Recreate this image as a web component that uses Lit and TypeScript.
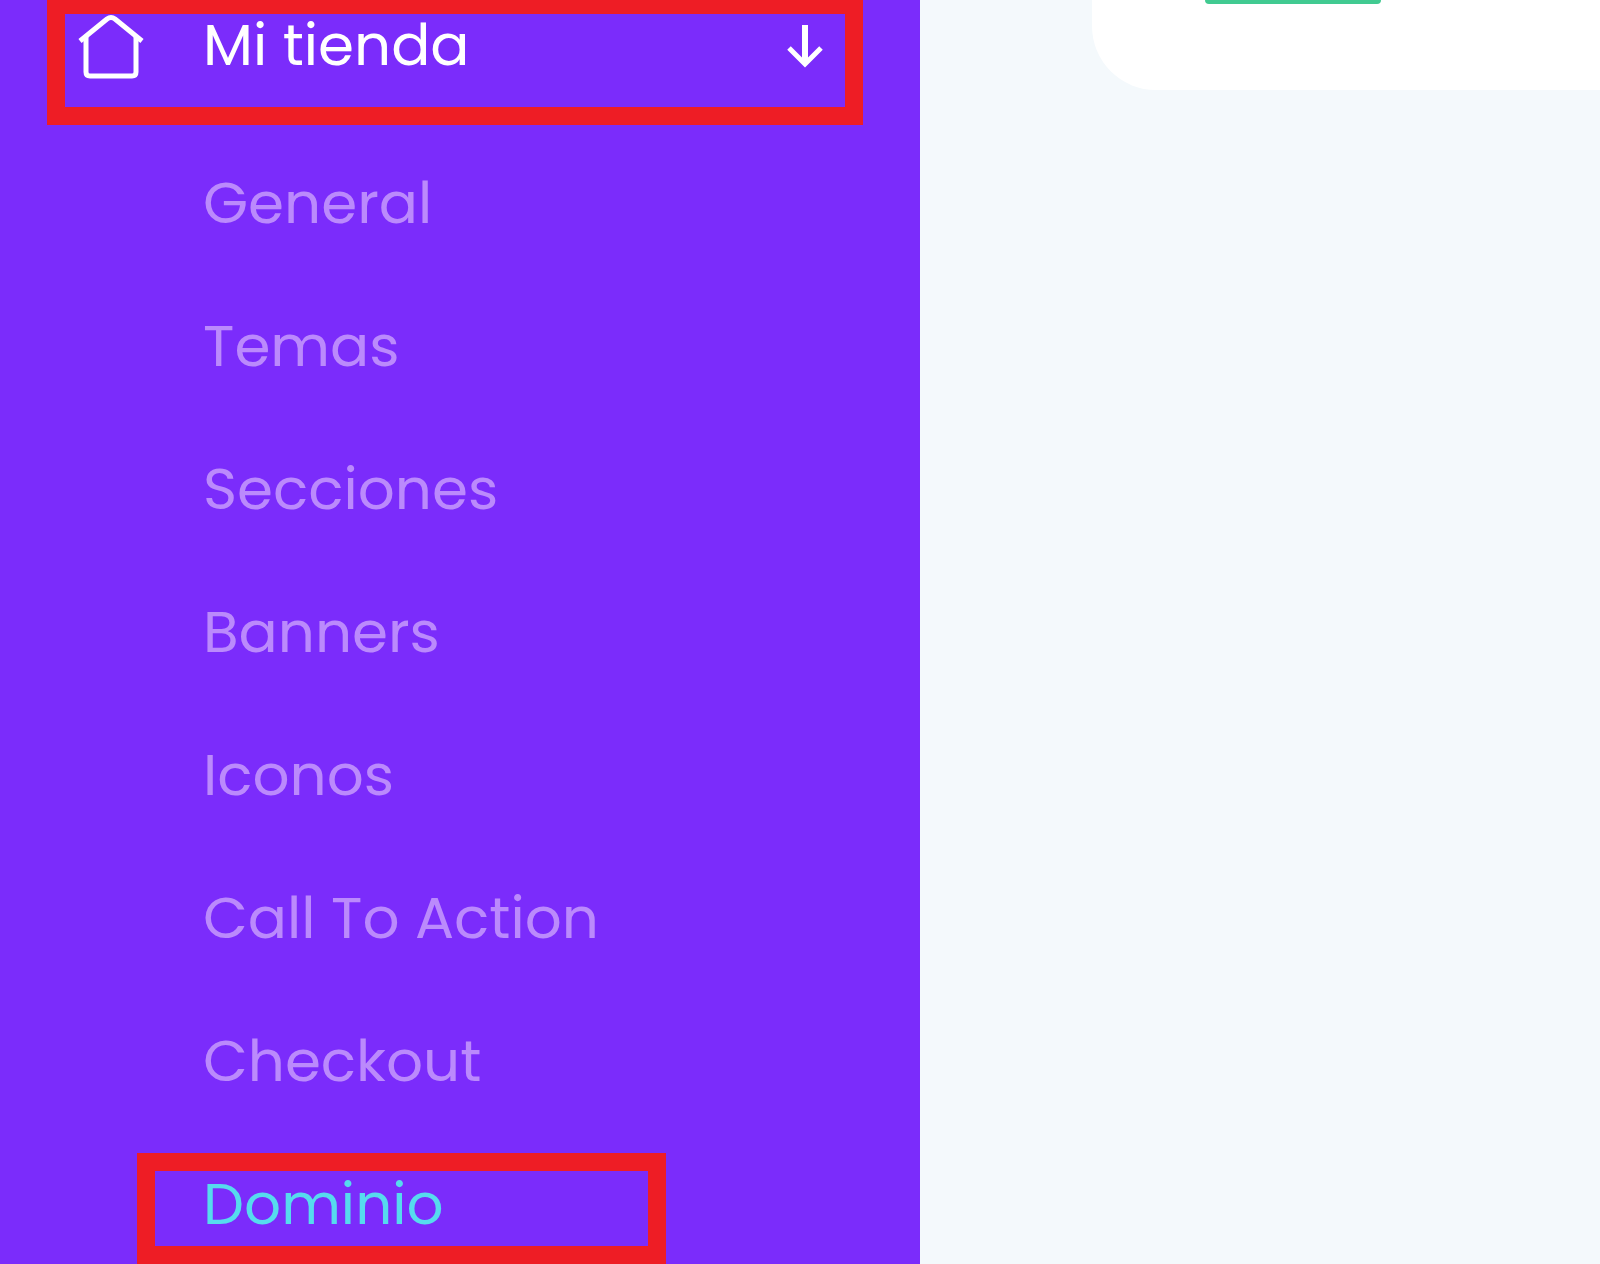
import { LitElement, html, css } from "lit";
import { customElement, state } from "lit/decorators.js";
import { classMap } from "lit/directives/class-map.js";

const sections = [
  "General",
  "Temas",
  "Secciones",
  "Banners",
  "Iconos",
  "Call To Action",
  "Checkout",
  "Dominio",
];

@customElement("app-root")
export class AppRoot extends LitElement {
  @state() private active = "Dominio";
  @state() private open = true;

  static styles = css`
    :host {
      display: flex;
      min-height: 100vh;
      overflow: hidden;
      background: #f4f9fc;
      font-family: Poppins, Inter, "Liberation Sans", sans-serif;
      font-size: 58px;
    }
    * {
      box-sizing: border-box;
    }
    .sidebar {
      flex: 0 0 920px;
      padding: 0 57px 0 47px;
      background: #7b2cfb;
    }
    .group {
      display: flex;
      align-items: flex-start;
      width: 100%;
      height: 129px;
      margin-top: -4px;
      padding: 0 20px 0 13px;
      border: 18px solid #ee1d25;
      background: none;
      color: #fff;
      font: inherit;
      line-height: 62px;
      text-align: left;
      cursor: pointer;
    }
    .home {
      flex: none;
      width: 66px;
      height: 66px;
    }
    .label {
      flex: 1;
      padding-left: 59px;
    }
    .arrow {
      flex: none;
      width: 40px;
      height: 66px;
    }
    .items {
      display: grid;
      gap: 32px;
      margin: 0;
      padding: 27px 0 0 90px;
      list-style: none;
    }
    .link {
      display: block;
      width: 529px;
      padding: 0 0 10px 48px;
      border: 18px solid transparent;
      color: #bb8afc;
      line-height: 65px;
      text-decoration: none;
    }
    .link.active {
      border-color: #ee1d25;
      color: #56dbee;
    }
    .content {
      flex: 1;
      min-width: 0;
      padding-left: 172px;
    }
    .card {
      height: 90px;
      padding-left: 113px;
      border-bottom-left-radius: 64px;
      background: #fff;
    }
    .action {
      display: block;
      width: 176px;
      height: 4px;
      padding: 0;
      border: 0;
      border-radius: 0 0 12px 12px;
      background: #41ca91;
    }
  `;

  render() {
    return html`
      <nav class="sidebar">
        <button
          class="group"
          aria-expanded=${this.open}
          @click=${() => (this.open = !this.open)}
        >
          <svg class="home" viewBox="0 0 66 66" fill="none" stroke="#fff" stroke-width="5" aria-hidden="true">
            <path d="M2 27 L29 5 Q33 2 37 5 L64 27" stroke-linejoin="round" />
            <path d="M8 23 V58 Q8 62 12 62 H54 Q58 62 58 58 V23" />
          </svg>
          <span class="label">Mi tienda</span>
          <svg class="arrow" viewBox="0 0 40 66" fill="none" stroke="#fff" aria-hidden="true">
            <path d="M20 11 V50" stroke-width="6" />
            <path d="M4 34 L20 50 L36 34" stroke-width="5" />
          </svg>
        </button>
        ${this.open
          ? html`<ul class="items">
              ${sections.map(
                (name) => html`<li>
                  <a
                    class=${classMap({ link: true, active: name === this.active })}
                    href="#"
                    @click=${(e: Event) => {
                      e.preventDefault();
                      this.active = name;
                    }}
                    >${name}</a
                  >
                </li>`
              )}
            </ul>`
          : null}
      </nav>
      <main class="content">
        <div class="card"><button class="action"></button></div>
      </main>
    `;
  }
}
